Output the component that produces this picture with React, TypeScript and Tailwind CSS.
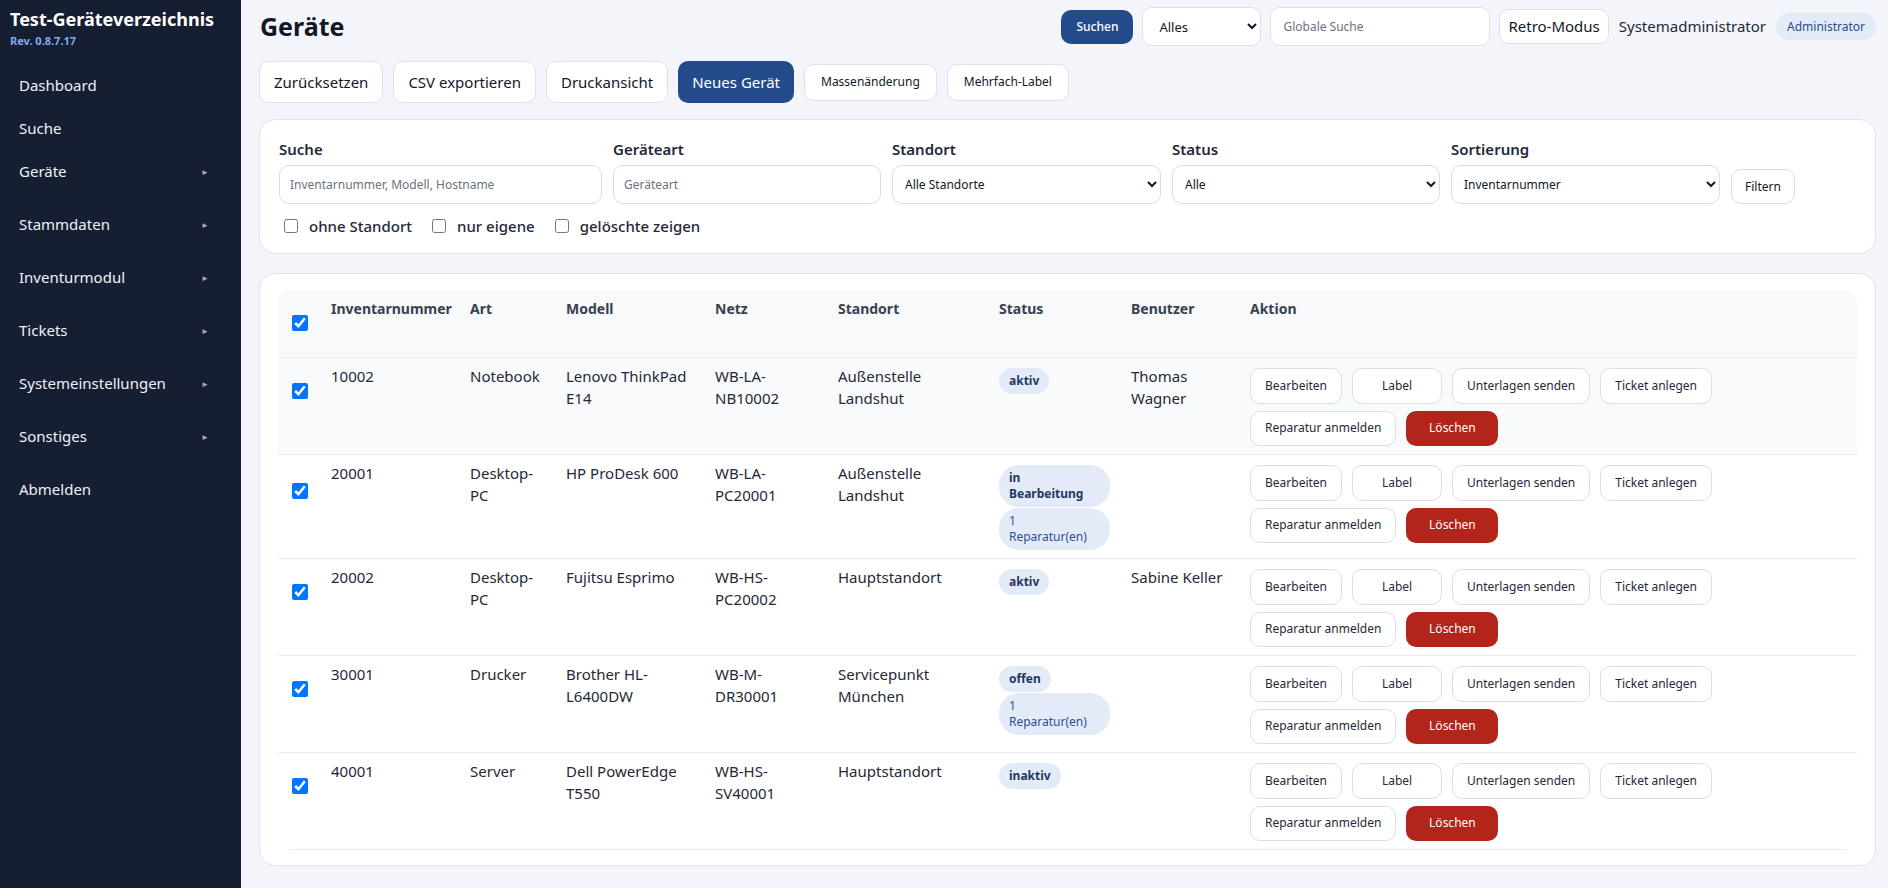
import React from 'react';

const NAV = [
  { label: 'Dashboard', sub: false },
  { label: 'Suche', sub: false },
  { label: 'Geräte', sub: true },
  { label: 'Stammdaten', sub: true },
  { label: 'Inventurmodul', sub: true },
  { label: 'Tickets', sub: true },
  { label: 'Systemeinstellungen', sub: true },
  { label: 'Sonstiges', sub: true },
  { label: 'Abmelden', sub: false },
];

type Badge = { lines: string[]; bold: boolean; wide?: boolean };

type Row = {
  nr: string;
  art: string;
  modell: string;
  netz: string;
  standort: string;
  status: Badge[];
  benutzer: string;
};

const ROWS: Row[] = [
  {
    nr: '10002', art: 'Notebook', modell: 'Lenovo ThinkPad E14', netz: 'WB-LA-NB10002',
    standort: 'Außenstelle Landshut', status: [{ lines: ['aktiv'], bold: true }], benutzer: 'Thomas Wagner',
  },
  {
    nr: '20001', art: 'Desktop-PC', modell: 'HP ProDesk 600', netz: 'WB-LA-PC20001',
    standort: 'Außenstelle Landshut',
    status: [
      { lines: ['in', 'Bearbeitung'], bold: true, wide: true },
      { lines: ['1', 'Reparatur(en)'], bold: false, wide: true },
    ],
    benutzer: '',
  },
  {
    nr: '20002', art: 'Desktop-PC', modell: 'Fujitsu Esprimo', netz: 'WB-HS-PC20002',
    standort: 'Hauptstandort', status: [{ lines: ['aktiv'], bold: true }], benutzer: 'Sabine Keller',
  },
  {
    nr: '30001', art: 'Drucker', modell: 'Brother HL-L6400DW', netz: 'WB-M-DR30001',
    standort: 'Servicepunkt München',
    status: [
      { lines: ['offen'], bold: true },
      { lines: ['1', 'Reparatur(en)'], bold: false, wide: true },
    ],
    benutzer: '',
  },
  {
    nr: '40001', art: 'Server', modell: 'Dell PowerEdge T550', netz: 'WB-HS-SV40001',
    standort: 'Hauptstandort', status: [{ lines: ['inaktiv'], bold: true }], benutzer: '',
  },
];

const COLS = [41, 139, 96, 149, 123, 161, 132, 119];

function Sidebar() {
  return (
    <aside className="w-[241px] shrink-0 bg-[#161e31] text-[#eef1f7]">
      <div className="h-[64px] pl-[10px] pt-[7px]">
        <div className="text-[18px] font-bold leading-[25px] text-white">Test-Geräteverzeichnis</div>
        <div className="mt-[1px] text-[11px] font-bold leading-[16px] text-[#86a9ee]">Rev. 0.8.7.17</div>
      </div>
      <nav className="flex flex-col">
        {NAV.map(item => (
          <div
            key={item.label}
            className={`flex h-[43px] items-center justify-between pl-[19px] pr-[32px] text-[15px] ${item.sub ? 'mb-[10px]' : ''}`}
          >
            <span>{item.label}</span>
            {item.sub && <span className="text-[8px] text-[#a3abbb]">►</span>}
          </div>
        ))}
      </nav>
    </aside>
  );
}

function Header() {
  return (
    <div className="flex h-[53px] items-center justify-between">
      <h1 className="pl-[1px] text-[25px] font-bold text-[#111827]">Geräte</h1>
      <div className="flex items-center gap-[9px]">
        <button className="h-[34px] rounded-[10px] bg-[#234b8c] px-[15px] text-[12px] font-medium text-white">Suchen</button>
        <select className="h-[39px] w-[119px] rounded-[10px] border border-[#dbe0ea] bg-white px-[12px] text-[13px] text-[#111827]">
          <option>Alles</option>
        </select>
        <input
          className="h-[39px] w-[220px] rounded-[10px] border border-[#dbe0ea] bg-white px-[12px] text-[12px] placeholder:text-[#6b7280]"
          placeholder="Globale Suche"
        />
        <button className="h-[35px] rounded-[10px] border border-[#dbe0ea] bg-white px-[8px] text-[15px] text-[#111827]">Retro-Modus</button>
        <span className="ml-[1px] text-[15px] text-[#1f2937]">Systemadministrator</span>
        <span className="ml-[1px] flex h-[27px] items-center rounded-full bg-[#e4ebf8] px-[11px] text-[12px] text-[#2b4d8c]">Administrator</span>
      </div>
    </div>
  );
}

function Toolbar() {
  const big = 'h-[42px] rounded-[10px] border border-[#dde2ec] bg-white px-[14px] text-[15px] text-[#111827]';
  const small = 'h-[37px] rounded-[10px] border border-[#dde2ec] bg-white px-[16px] text-[12px] text-[#111827]';
  return (
    <div className="mt-[8px] flex items-center gap-[10px]">
      <button className={big}>Zurücksetzen</button>
      <button className={big}>CSV exportieren</button>
      <button className={big}>Druckansicht</button>
      <button className="h-[42px] rounded-[10px] bg-[#234b8c] px-[14px] text-[15px] text-white">Neues Gerät</button>
      <button className={small}>Massenänderung</button>
      <button className={small}>Mehrfach-Label</button>
    </div>
  );
}

function Field({ label, width, children }: { label: string; width: string; children: React.ReactNode }) {
  return (
    <div className={`flex flex-col ${width}`}>
      <label className="mb-[6px] text-[15px] font-semibold leading-[20px] text-[#1f2937]">{label}</label>
      {children}
    </div>
  );
}

function Filters() {
  const input = 'h-[39px] w-full rounded-[10px] border border-[#d8dee9] bg-white px-[10px] text-[12px] placeholder:text-[#6b7280]';
  const select = 'h-[39px] w-full rounded-[10px] border border-[#d8dee9] bg-white px-[8px] text-[12px] text-[#111827]';
  return (
    <div className="mt-[16px] rounded-[16px] border border-[#dfe4ee] bg-white px-[19px] pb-[15px] pt-[19px]">
      <div className="flex items-end gap-[11px]">
        <Field label="Suche" width="w-[323px]">
          <input className={input} placeholder="Inventarnummer, Modell, Hostname" />
        </Field>
        <Field label="Geräteart" width="w-[268px]">
          <input className={input} placeholder="Geräteart" />
        </Field>
        <Field label="Standort" width="w-[269px]">
          <select className={select}><option>Alle Standorte</option></select>
        </Field>
        <Field label="Status" width="w-[268px]">
          <select className={select}><option>Alle</option></select>
        </Field>
        <Field label="Sortierung" width="w-[269px]">
          <select className={select}><option>Inventarnummer</option></select>
        </Field>
        <button className="h-[35px] rounded-[10px] border border-[#d8dee9] bg-white px-[13px] text-[12px] text-[#111827]">Filtern</button>
      </div>
      <div className="mt-[11px] flex items-center pl-[5px] text-[15px] font-medium text-[#1f2937]">
        {['ohne Standort', 'nur eigene', 'gelöschte zeigen'].map(t => (
          <label key={t} className="mr-[20px] flex items-center">
            <input type="checkbox" className="h-[14px] w-[14px]" />
            <span className="ml-[11px]">{t}</span>
          </label>
        ))}
      </div>
    </div>
  );
}

function StatusBadge({ b }: { b: Badge }) {
  return (
    <span
      className={`rounded-[20px] bg-[#e4ebf8] px-[10px] py-[5px] text-[12px] leading-[16px] ${
        b.wide ? 'block w-[111px]' : 'inline-block'
      } ${b.bold ? 'font-bold text-[#1f3763]' : 'text-[#2b4f94]'}`}
    >
      {b.lines.map(l => (
        <span key={l} className="block">{l}</span>
      ))}
    </span>
  );
}

function Actions() {
  const btn = 'min-w-[90px] rounded-[10px] border border-[#d9dfeb] bg-white px-[14px] text-[12px] text-[#1f2937]';
  return (
    <div className="flex max-w-[480px] flex-wrap gap-x-[10px] gap-y-[7px]">
      <button className={`${btn} h-[36px]`}>Bearbeiten</button>
      <button className={`${btn} h-[36px]`}>Label</button>
      <button className={`${btn} h-[36px]`}>Unterlagen senden</button>
      <button className={`${btn} h-[36px]`}>Ticket anlegen</button>
      <button className={`${btn} h-[35px]`}>Reparatur anmelden</button>
      <button className="h-[35px] min-w-[92px] rounded-[10px] bg-[#b3241a] px-[14px] text-[12px] text-white">Löschen</button>
    </div>
  );
}

function DeviceTable() {
  const th = 'h-[67px] pl-[12px] pr-[8px] pt-[8px] text-left align-top text-[14px] font-bold text-[#374151]';
  const td = 'border-t border-[#e8ebf1] pl-[12px] pr-[8px] pt-[7px] pb-[8px] align-top';
  return (
    <div className="mt-[19px] rounded-[16px] border border-[#dfe4ee] bg-white px-[18px] pb-[15px] pt-[16px]">
      <table className="w-full table-fixed border-separate border-spacing-0 text-[15px] leading-[22px] text-[#1f2937]">
        <colgroup>
          {COLS.map((w, i) => (
            <col key={i} style={{ width: w }} />
          ))}
          <col />
        </colgroup>
        <thead>
          <tr className="bg-[#f8f9fb]">
            <th className="rounded-tl-[14px] pl-[14px] align-middle">
              <input type="checkbox" defaultChecked className="block h-[16px] w-[16px]" />
            </th>
            <th className={th}>Inventarnummer</th>
            <th className={th}>Art</th>
            <th className={th}>Modell</th>
            <th className={th}>Netz</th>
            <th className={th}>Standort</th>
            <th className={th}>Status</th>
            <th className={th}>Benutzer</th>
            <th className={`${th} rounded-tr-[14px]`}>Aktion</th>
          </tr>
        </thead>
        <tbody>
          {ROWS.map((r, i) => (
            <tr key={r.nr} className={i === 0 ? 'bg-[#f9fafc]' : ''}>
              <td className="border-t border-[#e8ebf1] pb-[30px] pl-[14px] align-middle">
                <input type="checkbox" defaultChecked className="block h-[16px] w-[16px]" />
              </td>
              <td className={td}>{r.nr}</td>
              <td className={td}>{r.art}</td>
              <td className={td}>{r.modell}</td>
              <td className={td}>{r.netz}</td>
              <td className={td}>{r.standort}</td>
              <td className="border-t border-[#e8ebf1] pb-[8px] pl-[12px] pr-[8px] pt-[10px] align-top">
                <div className="flex flex-col items-start gap-[1px]">
                  {r.status.map((b, j) => (
                    <StatusBadge key={j} b={b} />
                  ))}
                </div>
              </td>
              <td className={td}>{r.benutzer}</td>
              <td className="border-t border-[#e8ebf1] pb-[8px] pl-[12px] pr-[8px] pt-[10px] align-top">
                <Actions />
              </td>
            </tr>
          ))}
        </tbody>
      </table>
      <div className="mx-[11px] border-t border-[#e8ebf1]" />
    </div>
  );
}

export default function App() {
  return (
    <div className="flex min-h-screen bg-[#f3f5fa] font-['Noto_Sans',sans-serif]">
      <Sidebar />
      <main className="flex-1 pl-[18px] pr-[12px]">
        <Header />
        <Toolbar />
        <Filters />
        <DeviceTable />
      </main>
    </div>
  );
}
